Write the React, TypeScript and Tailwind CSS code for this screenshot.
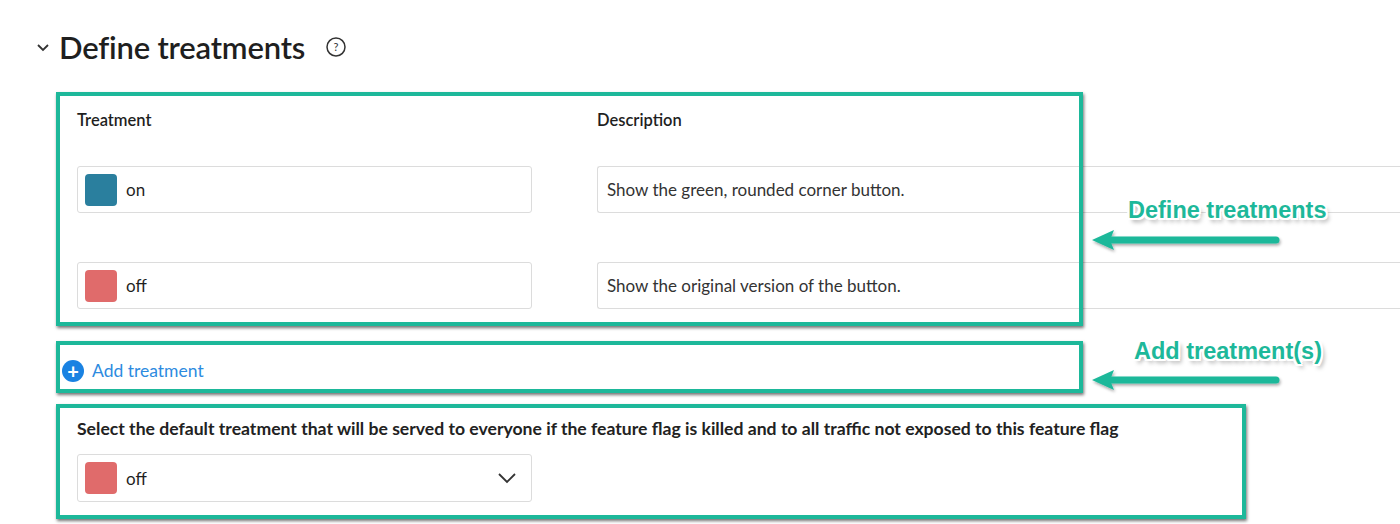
import React from "react";

const teal = "#1db89a";

function Swatch({ c }: { c: string }) {
  return <div className="w-8 h-8 rounded-[4px]" style={{ background: c }} />;
}

function Arrow({ top }: { top: number }) {
  return (
    <svg className="absolute" style={{ left: 1088, top }} width="200" height="30" viewBox="0 0 200 30">
      <g filter="url(#sh)">
        <line x1="22" y1="14" x2="188" y2="14" stroke={teal} strokeWidth="7" strokeLinecap="round" />
        <path d="M4 14 L26 4 L22 14 L26 24 Z" fill={teal} />
      </g>
      <defs>
        <filter id="sh" x="-10%" y="-50%" width="120%" height="200%">
          <feDropShadow dx="1" dy="2" stdDeviation="1.5" floodColor="#000" floodOpacity="0.35" />
        </filter>
      </defs>
    </svg>
  );
}

function Label({ text, left, top }: { text: string; left: number; top: number }) {
  return (
    <div
      className="absolute text-[23.5px] font-bold whitespace-nowrap"
      style={{
        left,
        top,
        color: teal,
        fontFamily: "'Liberation Sans', Arial, sans-serif",
        textShadow:
          "2px 0 #fff,-2px 0 #fff,0 2px #fff,0 -2px #fff,2px 2px #fff,-2px -2px #fff,2px -2px #fff,-2px 2px #fff,3px 4px 4px rgba(0,0,0,0.35)",
      }}
    >
      {text}
    </div>
  );
}

function Box({ l, t, w, h }: { l: number; t: number; w: number; h: number }) {
  return (
    <div
      className="absolute border-4 border-[#1db89a] shadow-[1px_2px_3px_rgba(0,0,0,0.55)]"
      style={{ left: l, top: t, width: w, height: h }}
    />
  );
}

export default function App() {
  return (
    <div className="relative w-[1400px] h-[524px] bg-white overflow-hidden text-[#1f1f1f]" style={{ fontFamily: "Lato, 'Noto Sans', sans-serif" }}>
      <div className="flex items-center gap-3 pl-[35px] pt-[28px] h-[66px]">
        <svg width="16" height="16" viewBox="0 0 16 16"><path d="M3 6 L8 11 L13 6" fill="none" stroke="#333" strokeWidth="1.8" /></svg>
        <h1 className="text-[31px] font-semibold tracking-[-0.2px] -ml-1">Define treatments</h1>
        <svg className="ml-2" width="22" height="22" viewBox="0 0 22 22">
          <circle cx="11" cy="11" r="9" fill="none" stroke="#333" strokeWidth="1.5" />
          <text x="11" y="15" textAnchor="middle" fontSize="11" fill="#333" fontFamily="Lato">?</text>
        </svg>
      </div>

      <div className="pl-[77px] pt-[42px]">
        <div className="flex text-[16.5px] font-semibold h-[24px]">
          <div className="w-[520px]">Treatment</div>
          <div>Description</div>
        </div>
        {[
          { c: "#2a7f9e", n: "on", d: "Show the green, rounded corner button." },
          { c: "#e06b6b", n: "off", d: "Show the original version of the button." },
        ].map((r, i) => (
          <div key={i} className={`flex ${i === 0 ? "mt-[34px]" : "mt-[49px]"}`}>
            <div className="w-[455px] h-[47px] border border-[#dcdcdc] rounded-[3px] flex items-center pl-[7px] gap-[9px] text-[17px]">
              <Swatch c={r.c} />
              <span>{r.n}</span>
            </div>
            <div className="ml-[65px] flex-1 h-[47px] border border-[#dcdcdc] border-r-0 rounded-l-[3px] flex items-center pl-[9px] text-[17px] text-[#333]">
              {r.d}
            </div>
          </div>
        ))}
      </div>

      <div className="flex items-center gap-2 pl-[62px] mt-[51px] h-[22px]">
        <div className="w-[22px] h-[22px] rounded-full bg-[#1a82e2] flex items-center justify-center text-white text-[20px] leading-none font-bold">+</div>
        <span className="text-[17.5px] text-[#2d8be0]">Add treatment</span>
      </div>

      <div className="pl-[77px] mt-[34px]">
        <div className="text-[17.6px] font-bold text-[#222] whitespace-nowrap">
          Select the default treatment that will be served to everyone if the feature flag is killed and to all traffic not exposed to this feature flag
        </div>
        <div className="mt-[12px] w-[455px] h-[48px] border border-[#dcdcdc] rounded-[3px] flex items-center pl-[7px] pr-[14px] gap-[9px] text-[17px]">
          <Swatch c="#e06b6b" />
          <span className="flex-1">off</span>
          <svg width="20" height="12" viewBox="0 0 20 12"><path d="M2 2 L10 10 L18 2" fill="none" stroke="#333" strokeWidth="1.8" /></svg>
        </div>
      </div>

      <Box l={56} t={92} w={1027} h={234} />
      <Box l={56} t={341} w={1027} h={52} />
      <Box l={56} t={404} w={1190} h={115} />
      <Label text="Define treatments" left={1128} top={193} />
      <Label text="Add treatment(s)" left={1134} top={334} />
      <Arrow top={226} />
      <Arrow top={366} />
    </div>
  );
}
